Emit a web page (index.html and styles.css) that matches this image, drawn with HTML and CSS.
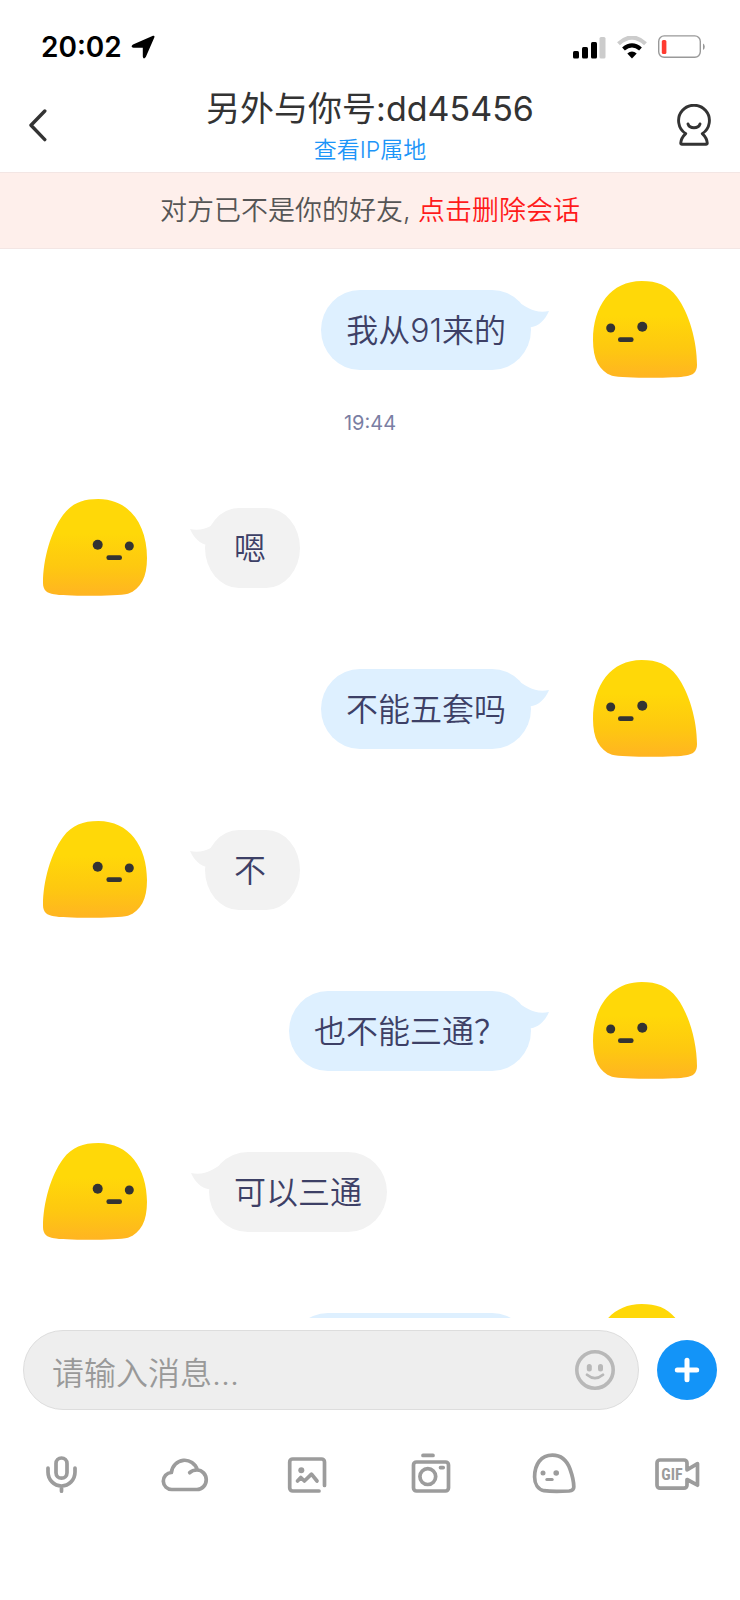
FILE: index.html
```html
<!DOCTYPE html>
<html lang="zh-CN">
<head>
<meta charset="utf-8">
<meta name="viewport" content="width=device-width, initial-scale=1">
<title>另外与你号:dd45456</title>
<link rel="stylesheet" href="styles.css">
</head>
<body>
<svg class="defs" width="0" height="0" aria-hidden="true">
  <defs>
    <linearGradient id="body-fill" x1="0" y1="0" x2="0" y2="1">
      <stop offset="0.35" stop-color="#ffd808"/>
      <stop offset="0.7" stop-color="#fec810"/>
      <stop offset="1" stop-color="#ffb422"/>
    </linearGradient>
    <symbol id="face" viewBox="0 0 104 97">
      <path fill="url(#body-fill)" d="M48.700 0C64 0 75 4 84 16C96 32 104 60 104 84C104 91 100 94.300 93 95.300C84 97.300 30 97.500 19 94.800C6 90 0 78 0 59C0 25 18 0 48.700 0Z"/>
      <circle cx="17.700" cy="47" r="4.500" fill="#333"/>
      <circle cx="49.300" cy="45.700" r="5" fill="#333"/>
      <rect x="25" y="56.300" width="15.600" height="4.700" rx="2.200" fill="#333"/>
    </symbol>
    <symbol id="tail" viewBox="0 0 28 24">
      <path fill="currentColor" d="M0 0C5 2 13 10 28 7C24 16 18 22 10 23.300L0 23.300Z"/>
    </symbol>
  </defs>
</svg>
<div class="app">
  <div class="status">
    <div class="status-left">
      <span class="clock">20:02</span>
      <svg class="locator" viewBox="0 0 24 24" aria-hidden="true"><path d="M22 .8Q24 .4 23.300 2.400L14.800 22Q12.500 25 11.800 21.500V12.800H2.500Q-1 11.800 2 9.600Z" fill="#000"/></svg>
    </div>
    <div class="status-right">
      <svg class="signal" viewBox="0 0 33 23" aria-hidden="true">
        <rect x="0" y="15" width="6" height="7.500" rx="1.500"/><rect x="9" y="11" width="6" height="11.500" rx="1.500"/><rect x="18" y="6" width="6" height="16.500" rx="1.500"/><rect x="26.500" y="1" width="6" height="21.500" rx="1.500" fill="#ccc"/>
      </svg>
      <svg class="wifi" viewBox="0 0 30 23" aria-hidden="true">
        <path d="M1.500 7.800Q15-4.600 28.500 7.800" fill="none" stroke="#ccc" stroke-width="4.200"/>
        <path d="M6.500 13Q15 5.800 23.500 13" fill="none" stroke="#000" stroke-width="4.200"/>
        <path d="M10.300 17.500Q15 13.600 19.700 17.500L15 22.500Z"/>
      </svg>
      <svg class="battery" viewBox="0 0 48 24" aria-hidden="true">
        <rect x=".7" y=".9" width="41.600" height="21.400" rx="5.500" fill="none" stroke="#999" stroke-width="1.400"/>
        <rect x="3.800" y="5" width="4.600" height="14" rx="1.500" fill="#ff3b30"/>
        <path d="M45 8.500Q46.800 9.500 46.800 11.700T45 15Z" fill="#999"/>
      </svg>
    </div>
  </div>

  <header class="header">
    <button class="icon-button back" aria-label="返回">
      <svg viewBox="0 0 20 34" aria-hidden="true"><path d="M16.800 3L3 17.300L16.800 31.600" fill="none" stroke="#333" stroke-width="3.400" stroke-linecap="round" stroke-linejoin="round"/></svg>
    </button>
    <div class="heading">
      <h1 class="title">另外与你号:dd45456</h1>
      <a class="location" href="#">查看IP属地</a>
    </div>
    <button class="icon-button profile" aria-label="个人资料">
      <svg viewBox="0 0 36 42" aria-hidden="true"><g fill="none" stroke="#333" stroke-width="2.900" stroke-linecap="round" stroke-linejoin="round"><path d="M9.700 29.600A15.400 15.400 0 1 1 26.300 29.600Q31 34 31.300 39.300Q31.300 40.300 30.300 40.300H5.700Q4.700 40.300 4.700 39.300Q5 34 9.700 29.600Z"/><path d="M12 20A6.200 5 0 0 0 24 20"/></g></svg>
    </button>
  </header>

  <p class="notice">对方已不是你的好友, <a class="notice-link" href="#">点击删除会话</a></p>

  <main class="messages">
    <div class="row mine">
      <div class="bubble">我从91来的<svg class="tail" aria-hidden="true"><use href="#tail"/></svg></div>
      <svg class="avatar" aria-hidden="true"><use href="#face"/></svg>
    </div>
    <time class="time">19:44</time>
    <div class="row">
      <svg class="avatar" aria-hidden="true"><use href="#face"/></svg>
      <div class="bubble short">嗯<svg class="tail" aria-hidden="true"><use href="#tail"/></svg></div>
    </div>
    <div class="row mine">
      <div class="bubble">不能五套吗<svg class="tail" aria-hidden="true"><use href="#tail"/></svg></div>
      <svg class="avatar" aria-hidden="true"><use href="#face"/></svg>
    </div>
    <div class="row">
      <svg class="avatar" aria-hidden="true"><use href="#face"/></svg>
      <div class="bubble short">不<svg class="tail" aria-hidden="true"><use href="#tail"/></svg></div>
    </div>
    <div class="row mine">
      <div class="bubble">也不能三通？<svg class="tail" aria-hidden="true"><use href="#tail"/></svg></div>
      <svg class="avatar" aria-hidden="true"><use href="#face"/></svg>
    </div>
    <div class="row">
      <svg class="avatar" aria-hidden="true"><use href="#face"/></svg>
      <div class="bubble">可以三通<svg class="tail" aria-hidden="true"><use href="#tail"/></svg></div>
    </div>
    <div class="row mine">
      <div class="bubble pending"><svg class="tail" aria-hidden="true"><use href="#tail"/></svg></div>
      <svg class="avatar" aria-hidden="true"><use href="#face"/></svg>
    </div>
  </main>

  <footer class="composer">
    <div class="entry">
      <div class="field">
        <input class="input" type="text" placeholder="请输入消息..." aria-label="请输入消息">
        <button class="icon-button emoji" aria-label="表情">
          <svg viewBox="0 0 40 40" aria-hidden="true"><g fill="none" stroke="#b8b8b8" stroke-linecap="round"><circle cx="20" cy="20" r="18.200" stroke-width="3.600"/><path d="M12 24.800Q20 31.500 28 24.800" stroke-width="2.800"/></g><rect x="11.800" y="14" width="5" height="7.400" rx="2.500" fill="#b8b8b8"/><rect x="23" y="14" width="5" height="7.400" rx="2.500" fill="#b8b8b8"/></svg>
        </button>
      </div>
      <button class="icon-button add" aria-label="更多">
        <svg viewBox="0 0 60 60" aria-hidden="true"><path d="M30 20.300V39.700M20.300 30H39.700" stroke="#fff" stroke-width="5" stroke-linecap="round"/></svg>
      </button>
    </div>
    <nav class="tools" aria-label="工具">
      <button class="icon-button tool" aria-label="语音"><svg viewBox="0 0 48 48"><rect x="18" y="8" width="11" height="20.200" rx="5.500"/><path d="M10 18v4a13.500 14 0 0 0 27 0v-4M23.500 36v5.200"/></svg></button>
      <button class="icon-button tool" aria-label="云盘"><svg viewBox="0 0 48 48"><path d="M10.400 22.500A13.300 13.700 0 0 1 36.300 19.800M28.700 22.700Q31.500 20 36 20a9.200 9.700 0 0 1 0 19.500H11A8.400 8.500 0 0 1 10.400 22.500"/></svg></button>
      <button class="icon-button tool" aria-label="图片"><svg viewBox="0 0 48 48"><path d="M40.500 35.500V12a3 3 0 0 0-3-3H8.700a3 3 0 0 0-3 3v26a3 3 0 0 0 3 3H35"/><path d="M13.500 31L16.800 27.500L20.400 31L27.500 24.200L33 31"/><circle class="solid" cx="17.300" cy="20.300" r="3"/></svg></button>
      <button class="icon-button tool" aria-label="拍照"><svg viewBox="0 0 48 48"><rect x="5.500" y="12" width="35" height="29" rx="3"/><path d="M15 5.400H25M32.500 17.600H35.200"/><circle cx="19.800" cy="26.600" r="7.900"/></svg></button>
      <button class="icon-button tool" aria-label="贴纸"><svg viewBox="0 0 48 48"><path d="M21.500 5.200C31 5.200 36 11 39 19C41.500 26 42.800 32 42.800 37C42.800 40 41 40.700 38 41C31 41.300 18 41.300 13 40.700C7 39.500 3.600 34 3.600 27C3.600 14 10 5.200 21.500 5.200Z"/><path class="thin" d="M15.800 29.400H21.200"/><circle class="solid" cx="12" cy="23" r="2.500"/><circle class="solid" cx="25.200" cy="23" r="2.800"/></svg></button>
      <button class="icon-button tool" aria-label="GIF"><svg viewBox="0 0 48 48"><path d="M33 19.800V13a3 3 0 0 0-3-3H6a3 3 0 0 0-3 3V35.200a3 3 0 0 0 3 3h24a3 3 0 0 0 3-3V29.500L43.500 35.200V13.600L33 19.800"/><text class="gif-label" x="18" y="30" text-anchor="middle">GIF</text></svg></button>
    </nav>
  </footer>
</div>
</body>
</html>
```
FILE: styles.css
```css
* { box-sizing: border-box; }

body {
  margin: 0;
  background: #fff;
  color: #333;
  font-family: Inter, "Noto Sans CJK SC", sans-serif;
}

a { text-decoration: none; }

.defs { position: absolute; }

.app {
  display: flex;
  flex-direction: column;
  height: 100vh;
}

.icon-button {
  display: block;
  padding: 0;
  border: 0;
  background: none;
}

.icon-button svg { display: block; width: 100%; }

/* Status bar */
.status {
  display: flex;
  justify-content: space-between;
  align-items: center;
  height: 84px;
  padding: 10px 34px 0 41px;
}

.status-left,
.status-right { display: flex; align-items: center; }

.status-left { gap: 9px; }
.status-right { gap: 11px; }

.clock {
  color: #000;
  font-size: 28px;
  font-weight: 600;
  line-height: 32px;
}

.locator { width: 24px; height: 24px; }
.signal { width: 33px; height: 23px; }
.wifi { width: 30px; height: 23px; }
.battery { width: 48px; height: 24px; }

/* Header */
.header {
  display: grid;
  grid-template-columns: 36px 1fr 36px;
  height: 88px;
  padding: 0 28px;
}

.back { align-self: center; width: 20px; margin-top: -6px; }
.profile { align-self: center; width: 36px; margin-top: -6px; }

.heading {
  display: flex;
  flex-direction: column;
  align-items: center;
}

.title {
  margin: 0;
  font-size: 34px;
  font-weight: 400;
  line-height: 50px;
}

.location {
  color: #1c95f8;
  font-size: 23px;
  font-weight: 350;
  line-height: 32px;
}

.notice {
  margin: 0;
  padding-top: 1px;
  border: solid #f3e6e4;
  border-width: 1px 0;
  background: #feefeb;
  color: #555;
  font-size: 27px;
  font-weight: 350;
  line-height: 74px;
  text-align: center;
}

.notice-link { color: #ff1a1a; }

/* Conversation */
.messages {
  flex: 1;
  min-height: 0;
  overflow: hidden;
}

.row {
  display: flex;
  align-items: center;
  gap: 62px;
  padding: 32px 43px;
}

.mine { justify-content: flex-end; }

.avatar {
  flex: none;
  width: 104px;
  height: 97px;
  transform: scaleX(-1);
}

.mine .avatar { transform: none; }

.bubble {
  position: relative;
  min-height: 80px;
  padding: 1px 25px 0;
  border-radius: 39px / 40px;
  background: #f2f2f2;
  color: #3d4066;
  font-size: 32px;
  font-weight: 350;
  line-height: 79px;
}

.mine .bubble { background: #def0ff; }

.short {
  margin-left: -4px;
  padding: 1px 34px 0 29px;
  border-radius: 34px / 40px;
}

.pending { width: 242px; }

.tail {
  position: absolute;
  top: 14px;
  left: -18px;
  width: 28px;
  height: 24px;
  color: #f2f2f2;
  transform: scaleX(-1);
}

.short .tail { left: -15px; }

.mine .tail {
  left: auto;
  right: -18px;
  color: #def0ff;
  transform: none;
}

.time {
  display: block;
  height: 57px;
  color: #7a7ea3;
  font-size: 20px;
  line-height: 26px;
  text-align: center;
}

/* Composer */
.composer { padding-bottom: 102px; }

.entry {
  display: flex;
  align-items: center;
  gap: 18px;
  padding: 12px 23px 0;
}

.field {
  display: flex;
  flex: 1;
  align-items: center;
  height: 80px;
  padding: 0 23px 0 28px;
  border: 1px solid #ddd;
  border-radius: 40px;
  background: #eee;
}

.input {
  flex: 1;
  min-width: 0;
  height: 64px;
  margin-top: 6px;
  padding: 0;
  border: 0;
  outline: 0;
  background: none;
  color: #333;
  font: inherit;
  font-size: 32px;
  font-weight: 350;
}

.input::placeholder { color: #999; }

.emoji { width: 40px; }

.add {
  width: 60px;
  border-radius: 50%;
  background: #1394f8;
}

.tools {
  display: grid;
  grid-template-columns: repeat(6, 1fr);
  justify-items: center;
  padding-top: 40px;
}

.tool { width: 48px; }

.tool svg {
  fill: none;
  stroke: #9c9c9c;
  stroke-width: 3.7;
  stroke-linecap: round;
  stroke-linejoin: round;
}

.tool .thin { stroke-width: 3; }

.tool .solid { fill: #9c9c9c; stroke: none; }

.gif-label {
  fill: #9c9c9c;
  stroke: none;
  font-family: "Liberation Sans Narrow", "Roboto Condensed", "Liberation Sans", sans-serif;
  font-size: 16px;
  font-weight: 700;
}
```
